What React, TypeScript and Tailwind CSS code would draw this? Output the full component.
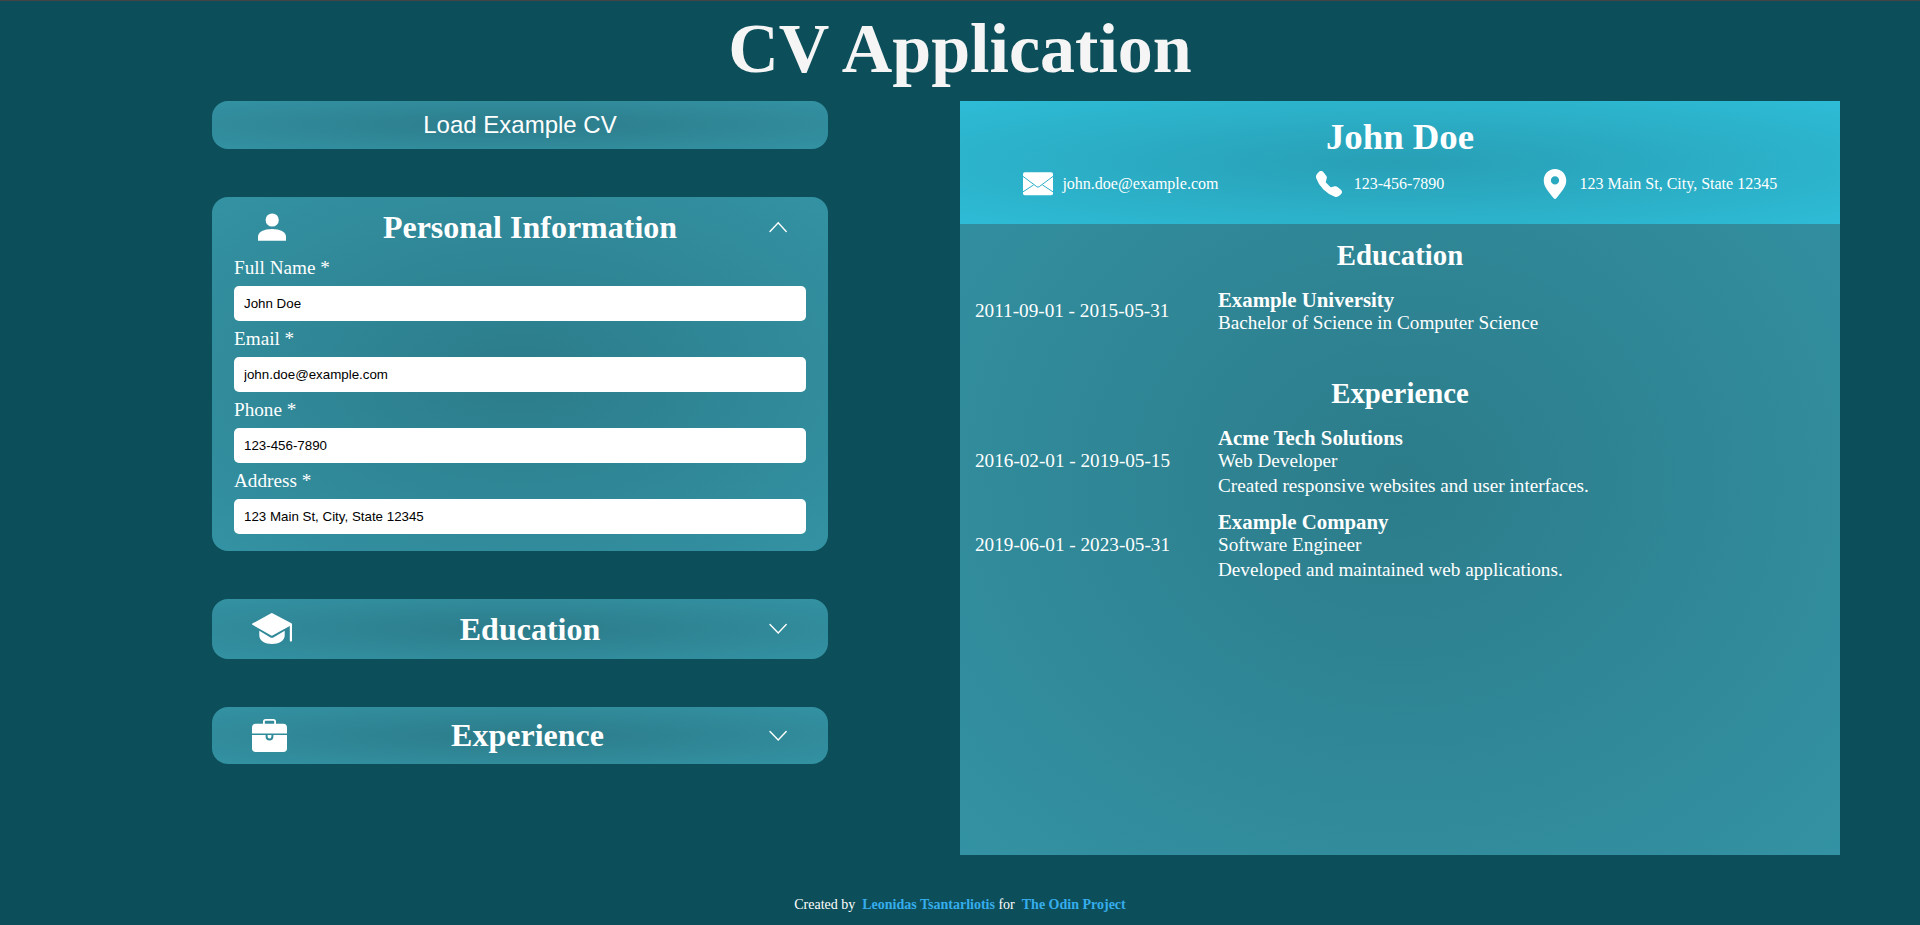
import React from "react";
import { BsTelephoneFill } from "react-icons/bs";

const card = "rounded-2xl bg-[radial-gradient(#2c7c8a,#3392a3)]";

function PersonIcon() {
  return (
    <svg width="40" height="40" viewBox="0 0 40 40" fill="currentColor">
      <circle cx="20.2" cy="13" r="6.6" />
      <path d="M6 33.7V29.8C6 25 12 22 20 22S34 25 34 29.8V33.7Z" />
    </svg>
  );
}

function CapIcon() {
  return (
    <svg width="40" height="40" viewBox="0 0 40 40" fill="currentColor">
      <path d="M18.7 4.5Q19.8 3.7 20.9 4.5L39.4 14.2Q40 14.6 40 15.2V31.6A1.1 1.1 0 0 1 37.8 31.6V17L20.9 26.3Q19.8 27 18.7 26.3L.4 15.8Q-.4 15.1 .4 14.5Z" />
      <path d="M7.3 21.8L18 28.2Q19.9 29.4 21.8 28.2L32.7 21.8V26.5C32.7 31.5 27 35 20 35S7.3 31.5 7.3 26.5Z" />
    </svg>
  );
}

function BriefcaseIcon() {
  return (
    <svg width="35" height="37" viewBox="0 0 35 37">
      <path d="M11.9 8V4.6Q11.9 2.9 13.6 2.9H21.4Q23.1 2.9 23.1 4.6V8" fill="none" stroke="#fff" strokeWidth="1.8" />
      <rect x="0" y="6.7" width="35" height="28.3" rx="3.8" fill="#fff" />
      <path d="M0 17.3H35" stroke="#308b9a" strokeWidth="1.5" />
      <path d="M14.6 17.3V19.6A2.9 2.9 0 0 0 20.4 19.6V17.3" fill="none" stroke="#308b9a" strokeWidth="2" />
    </svg>
  );
}

function EnvelopeIcon() {
  return (
    <svg width="30" height="30" viewBox="0 0 30 30">
      <rect x="0" y="3.3" width="30" height="23" rx="1.8" fill="#fff" />
      <path
        d="M0 7.4L13.8 17.7Q15 18.6 16.2 17.7L30 7.4M0 22.9L10.7 15.8M30 22.9L19.3 15.8"
        fill="none"
        stroke="#2db0c8"
        strokeWidth="1"
      />
    </svg>
  );
}

function PinIcon() {
  return (
    <svg width="30" height="30" viewBox="0 0 16 16" fill="currentColor" fillRule="evenodd">
      <path d="M8 0C4.6 0 2 2.7 2 6.1 2 9.6 4.7 12.1 7.3 15.6Q8 16.3 8.7 15.6C11.3 12.1 14 9.6 14 6.1 14 2.7 11.4 0 8 0ZM8 3.9A2.2 2.2 0 1 1 8 8.3A2.2 2.2 0 0 1 8 3.9Z" />
    </svg>
  );
}

function Chevron({ up }: { up?: boolean }) {
  return (
    <svg width="20" height="20" viewBox="0 0 20 20" fill="none" stroke="currentColor" strokeWidth="1.4" strokeLinecap="round">
      <path d={up ? "M2 14.4L10.2 5.8L18.2 14.4" : "M2 5.4L10.2 14L18.2 5.4"} />
    </svg>
  );
}

function Title({ icon, text, open }: { icon: React.ReactNode; text: string; open?: boolean }) {
  return (
    <div className="flex items-center justify-between px-10">
      {icon}
      <h2 className="text-[32px] leading-[37px] font-bold">{text}</h2>
      <Chevron up={open} />
    </div>
  );
}

function Field({ label, value }: { label: string; value: string }) {
  return (
    <label className="block h-[71px]">
      <span className="block h-9 pt-1.5 text-[19.2px] leading-[23px]">{label}</span>
      <input
        readOnly
        value={value}
        className="block h-[35px] w-full rounded-[5px] bg-white px-2.5 font-['Liberation_Sans',sans-serif] text-[13.333px] text-black"
      />
    </label>
  );
}

function SectionHeading({ text }: { text: string }) {
  return <h3 className="pt-[15px] pb-[17px] text-center text-[28.8px] leading-8 font-bold">{text}</h3>;
}

function Entry({ dates, name, role, details }: { dates: string; name: string; role: string; details?: string }) {
  return (
    <div className="grid grid-cols-[243px_1fr] items-center pl-[15px]">
      <div className={details ? "pb-px text-[19.2px]" : "text-[19.2px]"}>{dates}</div>
      <div>
        <h4 className="text-[20.8px] leading-6 font-bold">{name}</h4>
        <p className="text-[19.2px] leading-[22px]">{role}</p>
        {details && <p className="mt-[3px] text-[19.2px] leading-[22px]">{details}</p>}
      </div>
    </div>
  );
}

function Contact({ icon, text }: { icon: React.ReactNode; text: string }) {
  return (
    <div className="flex items-center gap-[9.6px]">
      <div className="flex size-[30px] items-center justify-center">{icon}</div>
      {text}
    </div>
  );
}

export default function App() {
  return (
    <div className="h-[925px] w-full overflow-hidden border-t border-[#444] bg-[#0c4f5a] font-['Liberation_Serif',serif] text-white">
      <h1 className="h-[100px] text-center text-[70px] leading-[96px] font-bold text-[#f5f5f5]">CV Application</h1>
      <div className="flex h-[754px]">
        <div className="ml-[212px] flex w-[616px] flex-col gap-12">
          <button className={`h-12 font-['Liberation_Sans',sans-serif] text-2xl ${card}`}>Load Example CV</button>
          <div className={`h-[354px] pt-2.5 ${card}`}>
            <Title icon={<PersonIcon />} text="Personal Information" open />
            <div className="px-[22px] pt-[3px]">
              <Field label="Full Name *" value="John Doe" />
              <Field label="Email *" value="john.doe@example.com" />
              <Field label="Phone *" value="123-456-7890" />
              <Field label="Address *" value="123 Main St, City, State 12345" />
            </div>
          </div>
          <div className={`h-[60px] pt-2.5 ${card}`}>
            <Title icon={<CapIcon />} text="Education" />
          </div>
          <div className={`h-[57px] pt-2.5 ${card}`}>
            <Title icon={<BriefcaseIcon />} text="Experience" />
          </div>
        </div>
        <div className="ml-[132px] w-[880px] bg-[radial-gradient(#2c7c8a,#3392a3)]">
          <div className="h-[123px] bg-[radial-gradient(#289fb5,#2ebcd6)] pt-3">
            <h2 className="text-center text-[36.8px] leading-[48px] font-bold">John Doe</h2>
            <div className="mt-2 flex justify-around px-[15px] text-base">
              <Contact icon={<EnvelopeIcon />} text="john.doe@example.com" />
              <Contact icon={<BsTelephoneFill size={26} />} text="123-456-7890" />
              <Contact icon={<PinIcon />} text="123 Main St, City, State 12345" />
            </div>
          </div>
          <section className="pb-7">
            <SectionHeading text="Education" />
            <Entry dates="2011-09-01 - 2015-05-31" name="Example University" role="Bachelor of Science in Computer Science" />
          </section>
          <section>
            <SectionHeading text="Experience" />
            <div className="flex flex-col gap-[13px]">
              <Entry
                dates="2016-02-01 - 2019-05-15"
                name="Acme Tech Solutions"
                role="Web Developer"
                details="Created responsive websites and user interfaces."
              />
              <Entry
                dates="2019-06-01 - 2023-05-31"
                name="Example Company"
                role="Software Engineer"
                details="Developed and maintained web applications."
              />
            </div>
          </section>
        </div>
      </div>
      <footer className="pt-10 text-center text-sm">
        Created by&nbsp; <a className="font-bold text-[#36adec]">Leonidas Tsantarliotis</a> for&nbsp;{" "}
        <a className="font-bold text-[#36adec]">The Odin Project</a>
      </footer>
    </div>
  );
}
